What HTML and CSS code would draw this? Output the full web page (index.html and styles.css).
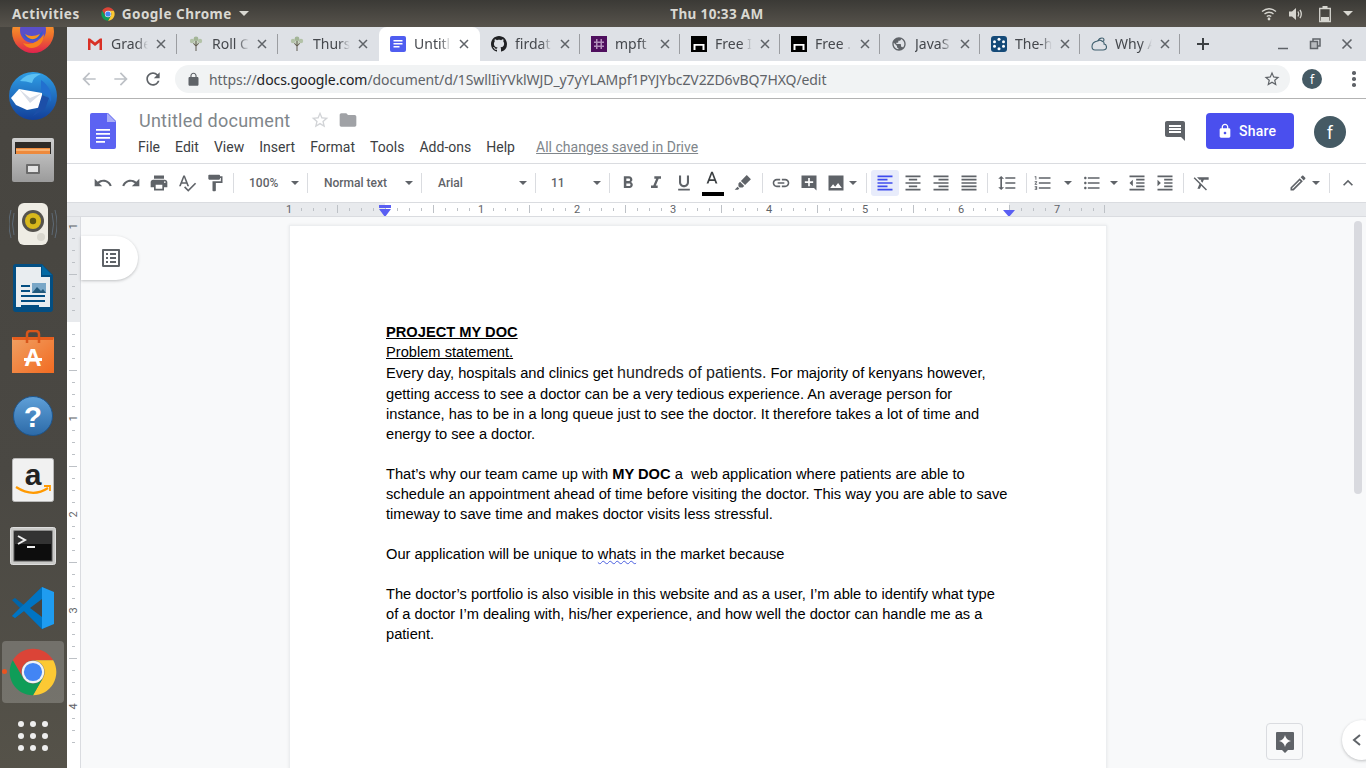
FILE: index.html
```html
<!DOCTYPE html>
<html lang="en">
<head>
<meta charset="utf-8">
<title>Untitled document - Google Docs</title>
<link rel="stylesheet" href="styles.css">
</head>
<body>
<svg class="defs" width="0" height="0" aria-hidden="true">
  <symbol id="chrome" viewBox="0 0 48 48">
    <path fill="#db4437" d="M6.68 14A20 20 0 0 1 41.32 14H24A10 10 0 0 0 15.34 29Z"/>
    <path fill="#fcc934" d="M41.32 14A20 20 0 0 1 24 44L32.66 29A10 10 0 0 0 24 14Z"/>
    <path fill="#0f9d58" d="M24 44A20 20 0 0 1 6.68 14L15.34 29A10 10 0 0 0 32.66 29Z"/>
    <circle cx="24" cy="24" r="9.6" fill="#f1f3f4"/>
    <circle cx="24" cy="24" r="7.8" fill="#4285f4"/>
  </symbol>
  <symbol id="tree" viewBox="0 0 16 16">
    <circle cx="4" cy="5" r="2.2" fill="#b3c2a8"/><circle cx="12" cy="5" r="2.2" fill="#b3c2a8"/>
    <circle cx="8" cy="3" r="2.4" fill="#a3b597"/><circle cx="8" cy="7" r="2.2" fill="#c3cfba"/>
    <path fill="#5f5a4e" d="M7.5 9V5h1v4l2-2 .6.6L8.5 10.3V15h-1v-4.7L5 7.6l.6-.6z"/>
  </symbol>
  <symbol id="arch" viewBox="0 0 16 16">
    <path fill="#000" d="M0 0h16v16H0z"/><path fill="#fff" d="M2.500 14V8h11v6h-2V9.800H4.500V14z"/>
  </symbol>
  <symbol id="close" viewBox="0 0 10 10">
    <path d="M1 1l8 8M9 1L1 9" stroke="#5f6368" stroke-width="1.500" fill="none"/>
  </symbol>
</svg>

<header class="topbar">
  <span class="top-left">
    <span class="top-label">Activities</span>
    <span class="app-menu">
      <svg class="app-logo" width="16" height="16"><use href="#chrome"/></svg>
      <span class="top-label">Google Chrome</span>
      <span class="top-caret"></span>
    </span>
  </span>
  <span class="top-label clock">Thu 10:33 AM</span>
  <span class="top-status">
    <svg width="16" height="16" viewBox="0 0 16 16" fill="none" stroke="#d6d5cf" stroke-width="1.400"><path d="M1 5.500q7-5.500 14 0M3.500 8q4.500-3.500 9 0M5.800 10.500q2.200-1.700 4.400 0"/><circle cx="8" cy="13" r="1.400" fill="#d6d5cf" stroke="none"/></svg>
    <svg class="vol" width="16" height="16" viewBox="0 0 16 16" fill="none" stroke="#d6d5cf" stroke-width="1.300"><path fill="#d6d5cf" stroke="none" d="M1 5.500h3L8 2v12L4 10.500H1z"/><path d="M10 5.500q1.500 2.500 0 5M12 3.800q2.600 4.200 0 8.400"/></svg>
    <svg width="14" height="18" viewBox="0 0 14 18" fill="none" stroke="#d6d5cf" stroke-width="1.300"><path d="M1.700 3.500h10.600v13H1.700z"/><path fill="#d6d5cf" stroke="none" d="M4.500 1h5v2h-5zM3 12h8v4H3z"/></svg>
    <span class="top-caret status-caret"></span>
  </span>
</header>

<div class="desktop">
  <nav class="dock">
    <div class="dock-inner">
      <div class="dock-item"><svg width="44" height="44" viewBox="0 0 44 44"><defs><linearGradient id="ff" x1="0" y1="0" x2="0" y2="1"><stop offset="0" stop-color="#ffc02e"/><stop offset=".6" stop-color="#f0702b"/><stop offset="1" stop-color="#e0224e"/></linearGradient></defs><circle cx="22" cy="22" r="21" fill="url(#ff)"/><circle cx="22" cy="20" r="13" fill="#5a4fc8"/><path fill="#2b5fce" d="M12 24q10 8 20-3-2 9-11 9-6 0-9-6z"/><path fill="#f7921f" d="M14 24q6 4 15 0-3 6-9 5-4-1-6-5z"/><path fill="#f7821f" d="M12 33q12 4 21-9-1 13-12 14-6 0-9-5z"/></svg></div>
      <div class="dock-item"><svg width="48" height="48" viewBox="0 0 48 48"><defs><linearGradient id="tb" x1="0" y1="0" x2="0" y2="1"><stop offset="0" stop-color="#2f9fe6"/><stop offset="1" stop-color="#123f9a"/></linearGradient></defs><circle cx="24" cy="24" r="24" fill="url(#tb)"/><path fill="#5dc1f3" d="M11 9Q18 0 32 2q-8 3-9 9-6-2-12-2z"/><path fill="#2270cf" d="M32 8q12 8 10 22-3-8-10-10z"/><path fill="#fff" d="M2 26l8-9 23 4v14L18 38 7 33z"/><path fill="#d8dde6" d="M10 17l11 9 12-5-12 10z"/><path fill="#1c4fa8" d="M33 23l7 3-4 11-12 7 5-8z"/></svg></div>
      <div class="dock-item"><svg width="42" height="44" viewBox="0 0 42 44"><defs><linearGradient id="fc" x1="0" y1="0" x2="0" y2="1"><stop offset="0" stop-color="#cfcfcf"/><stop offset="1" stop-color="#9b9b9b"/></linearGradient></defs><rect width="42" height="44" rx="2" fill="url(#fc)"/><rect x="3" y="4" width="36" height="12" fill="#2d2a27"/><rect x="4" y="10" width="34" height="6" fill="#ee8a3c"/><path stroke="#ffd9a8" d="M4 12h34"/><rect x="14" y="26" width="14" height="10" rx="1" fill="#6b6b6b"/><rect x="16" y="28" width="10" height="6" fill="#e4e4e4"/></svg></div>
      <div class="dock-item"><svg width="48" height="44" viewBox="0 0 48 44"><g fill="none" stroke="#6f87a0" stroke-opacity=".55"><path d="M2 8q-4 14 0 28M5 11q-3 11 0 22M46 8q4 14 0 28M43 11q3 11 0 22"/></g><rect x="9" y="1" width="30" height="42" rx="6" fill="#eeece4"/><circle cx="24" cy="19" r="11" fill="#55534e"/><circle cx="24" cy="19" r="8" fill="#d8b81c"/><circle cx="24" cy="19" r="3.200" fill="#5a5213"/><circle cx="32" cy="35" r="4" fill="#d9d7ce"/></svg></div>
      <div class="dock-item"><svg width="40" height="48" viewBox="0 0 40 48"><path fill="#034e82" d="M0 3q0-3 3-3h26l11 11v34q0 3-3 3H3q-3 0-3-3z"/><path fill="#e9edf0" d="M3 3h25v10h9v30H3z"/><path fill="#0369a3" d="M29 1l10 10H29z"/><path fill="#034e82" d="M8 21h9v2H8zM8 26h9v2H8zM8 31h24v2H8zM8 36h24v2H8zM8 41h18v2H8z"/><rect x="19" y="19" width="14" height="10" fill="#7aa7c7"/><path fill="#235a7c" d="M19 29l5-6 4 4 2-2 3 4z"/></svg></div>
      <div class="dock-item"><svg width="42" height="44" viewBox="0 0 42 44"><defs><linearGradient id="st" x1="0" y1="0" x2="1" y2="1"><stop offset="0" stop-color="#f0a063"/><stop offset="1" stop-color="#f26b21"/></linearGradient></defs><path fill="url(#st)" d="M0 7h42v36H0z"/><path fill="#e55d1d" d="M0 7h42l-1 3H1z"/><path d="M15 13V4q0-3 3-3h6q3 0 3 3v9" fill="none" stroke="#d9561b" stroke-width="2.500"/><text class="store-a" x="21" y="36" text-anchor="middle">A</text><path fill="#fff" d="M12 28h18v3H12z"/></svg></div>
      <div class="dock-item"><svg width="40" height="40" viewBox="0 0 40 40"><defs><linearGradient id="hp" x1="0" y1="0" x2="0" y2="1"><stop offset="0" stop-color="#5fa0d8"/><stop offset="1" stop-color="#2c6aa8"/></linearGradient></defs><circle cx="20" cy="20" r="19.500" fill="url(#hp)" stroke="#1e558c"/><text class="help-q" x="20" y="31" text-anchor="middle">?</text></svg></div>
      <div class="dock-item"><svg width="42" height="44" viewBox="0 0 42 44"><rect x=".5" y=".5" width="41" height="43" rx="2" fill="#f1f1f1" stroke="#b9b9b9"/><text class="amz-a" x="21" y="27" text-anchor="middle">a</text><path d="M4 29q17 11 32 1" fill="none" stroke="#f90" stroke-width="2.200"/><path d="M32 28h6v5" fill="none" stroke="#f90" stroke-width="1.800"/></svg></div>
      <div class="dock-item dock-term"><svg width="46" height="38" viewBox="0 0 46 38"><rect x=".5" y=".5" width="45" height="37" rx="2" fill="#c9c9c7" stroke="#dedede"/><rect x="4" y="4" width="38" height="30" fill="#0d0d0d" stroke="#555"/><rect x="5" y="5" width="36" height="12" fill="#333"/><path d="M8 9l7 4-7 4" fill="none" stroke="#efefef" stroke-width="2"/><path stroke="#efefef" stroke-width="2" d="M17 20h8"/></svg></div>
      <div class="dock-item"><svg width="44" height="44" viewBox="0 0 44 44"><path fill="#0065a9" d="M31 1L13 19 4 12l-3 2 8 8-8 8 3 2 9-7 18 18 4-2V3z"/><path fill="#007acc" d="M31 43L13 25l-9 7-3-2 8-8 22-21z" opacity=".75"/><path fill="#1f9cf0" d="M31 1l12 5v32l-12 5z"/><path fill="#464440" d="M31 13v18L19 22z"/></svg></div>
      <div class="dock-item dock-active"><span class="run-dot"></span><svg width="56" height="56"><use href="#chrome"/></svg></div>
      <div class="dock-item"><div class="apps"><i></i><i></i><i></i><i></i><i></i><i></i><i></i><i></i><i></i></div></div>
    </div>
  </nav>

  <main class="window">
    <div class="tabstrip">
      <div class="tabs">
        <div class="tab"><svg class="favicon" viewBox="0 0 16 16"><path fill="#d93025" d="M1 2.500h2l5 4 5-4h2v11.500h-2.500V6.500L8 10 3.500 6.500V14H1z"/></svg><span class="tab-label">Grade</span><svg class="tab-x"><use href="#close"/></svg></div>
        <div class="tab"><svg class="favicon"><use href="#tree"/></svg><span class="tab-label">Roll C</span><svg class="tab-x"><use href="#close"/></svg></div>
        <div class="tab"><svg class="favicon"><use href="#tree"/></svg><span class="tab-label">Thurs</span><svg class="tab-x"><use href="#close"/></svg></div>
        <div class="tab tab-active"><svg class="favicon" viewBox="0 0 16 16"><rect width="16" height="16" rx="2" fill="#4f5df0"/><path fill="#fff" d="M3.500 4h9v1.500h-9zM3.500 7h9v1.500h-9zM3.500 10h6v1.500h-6z"/></svg><span class="tab-label">Untitl</span><svg class="tab-x"><use href="#close"/></svg></div>
        <div class="tab"><svg class="favicon" viewBox="0 0 16 16"><path fill="#202124" d="M8 0C3.580 0 0 3.580 0 8c0 3.540 2.290 6.530 5.470 7.590.4.070.55-.17.55-.38 0-.19-.01-.82-.01-1.490-2.010.37-2.530-.49-2.690-.94-.09-.23-.48-.94-.82-1.130-.28-.15-.68-.52-.01-.53.63-.01 1.080.58 1.230.82.72 1.210 1.870.87 2.330.66.070-.52.28-.87.51-1.070-1.780-.2-3.640-.89-3.640-3.950 0-.87.31-1.590.82-2.150-.08-.2-.36-1.020.08-2.120 0 0 .67-.21 2.200.82.64-.18 1.320-.27 2-.27s1.360.09 2 .27c1.530-1.040 2.200-.82 2.200-.82.44 1.100.16 1.920.08 2.120.51.56.82 1.270.82 2.150 0 3.070-1.870 3.750-3.650 3.950.29.25.54.73.54 1.480 0 1.070-.01 1.930-.01 2.200 0 .21.15.46.55.38A8.010 8.010 0 0 0 16 8c0-4.420-3.580-8-8-8z"/></svg><span class="tab-label">firdat</span><svg class="tab-x"><use href="#close"/></svg></div>
        <div class="tab"><svg class="favicon" viewBox="0 0 16 16"><rect width="16" height="16" fill="#4f0f5e"/><path fill="#b28fbb" d="M5 3h1.500v10H5zM9.500 3H11v10H9.500zM3 5.500h10V7H3zM3 9.500h10V11H3z"/></svg><span class="tab-label">mpft</span><svg class="tab-x"><use href="#close"/></svg></div>
        <div class="tab"><svg class="favicon"><use href="#arch"/></svg><span class="tab-label">Free I</span><svg class="tab-x"><use href="#close"/></svg></div>
        <div class="tab"><svg class="favicon"><use href="#arch"/></svg><span class="tab-label">Free .</span><svg class="tab-x"><use href="#close"/></svg></div>
        <div class="tab"><svg class="favicon" viewBox="0 0 24 24"><path fill="#5f6368" d="M12 2C6.480 2 2 6.480 2 12s4.480 10 10 10 10-4.480 10-10S17.520 2 12 2zm-1 17.930c-3.950-.49-7-3.850-7-7.930 0-.62.080-1.210.21-1.790L9 15v1c0 1.100.9 2 2 2v1.930zm6.900-2.540c-.26-.81-1-1.390-1.900-1.390h-1v-3c0-.55-.45-1-1-1H8v-2h2c.55 0 1-.45 1-1V7h2c1.100 0 2-.9 2-2v-.41c2.930 1.190 5 4.060 5 7.410 0 2.080-.8 3.970-2.100 5.390z"/></svg><span class="tab-label">JavaS</span><svg class="tab-x"><use href="#close"/></svg></div>
        <div class="tab"><svg class="favicon" viewBox="0 0 16 16"><rect width="16" height="16" rx="3" fill="#154a78"/><g fill="#fff"><circle cx="8" cy="3.200" r="1.500"/><circle cx="8" cy="12.800" r="1.500"/><circle cx="3.500" cy="5.800" r="1.500"/><circle cx="12.500" cy="5.800" r="1.500"/><circle cx="3.500" cy="10.200" r="1.500"/><circle cx="12.500" cy="10.200" r="1.500"/></g></svg><span class="tab-label">The-h</span><svg class="tab-x"><use href="#close"/></svg></div>
        <div class="tab"><svg class="favicon" viewBox="0 0 16 16" fill="none" stroke="#40606f" stroke-width="1.100"><path d="M4 14h8q3.500-.2 3.500-3T13 8q.5-2-1.500-2.500Q9 3 6.500 5 1 6 1 10.500 1 14 4 14z"/><path d="M7 5q1-3 4-3 2 0 2 2 0 1-1.500 1.500"/></svg><span class="tab-label">Why A</span><svg class="tab-x"><use href="#close"/></svg></div>
      </div>
      <svg class="new-tab" width="14" height="14" viewBox="0 0 14 14"><path d="M7 1v12M1 7h12" stroke="#3c4043" stroke-width="2"/></svg>
      <div class="win-ctrls">
        <svg width="12" height="12" viewBox="0 0 12 12"><path d="M1 10.500h10" stroke="#5f6368" stroke-width="1.500"/></svg>
        <svg width="12" height="12" viewBox="0 0 12 12" fill="none" stroke="#5f6368" stroke-width="1.500"><path d="M4 3V1h7v7H9"/><path d="M1.500 3.500h7v7h-7z" fill="#5f6368" fill-opacity=".3"/></svg>
        <svg width="12" height="12" viewBox="0 0 12 12"><path d="M1.500 1.500l9 9M10.500 1.500l-9 9" stroke="#5f6368" stroke-width="1.600"/></svg>
      </div>
    </div>

    <div class="navbar">
      <svg class="nav-ico" viewBox="0 0 24 24"><path fill="#bdc1c6" d="M20 11H7.830l5.590-5.590L12 4l-8 8 8 8 1.410-1.410L7.830 13H20v-2z"/></svg>
      <svg class="nav-ico" viewBox="0 0 24 24"><path fill="#bdc1c6" d="M12 4l-1.410 1.410L16.170 11H4v2h12.170l-5.580 5.590L12 20l8-8z"/></svg>
      <svg class="nav-ico" viewBox="0 0 24 24"><path fill="#5f6368" d="M17.650 6.350C16.200 4.900 14.210 4 12 4c-4.420 0-7.990 3.580-7.990 8s3.570 8 7.990 8c3.730 0 6.840-2.550 7.730-6h-2.080c-.82 2.330-3.040 4-5.650 4-3.310 0-6-2.690-6-6s2.690-6 6-6c1.660 0 3.140.69 4.220 1.780L13 11h7V4l-2.350 2.350z"/></svg>
      <div class="omnibox">
        <svg class="omni-lock" viewBox="0 0 24 24"><path fill="#5f6368" d="M18 8h-1V6c0-2.760-2.240-5-5-5S7 3.240 7 6v2H6c-1.100 0-2 .9-2 2v10c0 1.100.9 2 2 2h12c1.100 0 2-.9 2-2V10c0-1.100-.9-2-2-2zm-2.900 0H8.900V6c0-1.710 1.390-3.100 3.100-3.100 1.710 0 3.100 1.390 3.100 3.100v2z"/></svg>
        <span class="url"><span class="url-dim">https://</span><span class="url-host">docs.google.com</span><span class="url-dim">/document/d/1SwllIiYVklWJD_y7yYLAMpf1PYJYbcZV2ZD6vBQ7HXQ/edit</span></span>
        <svg class="omni-star" viewBox="0 0 24 24"><path fill="#5f6368" d="M22 9.240l-7.190-.62L12 2 9.190 8.630 2 9.240l5.460 4.730L5.820 21 12 17.270 18.180 21l-1.630-7.030L22 9.240zM12 15.400l-3.760 2.270 1-4.280-3.320-2.880 4.380-.38L12 6.100l1.710 4.040 4.380.38-3.320 2.880 1 4.280L12 15.400z"/></svg>
      </div>
      <span class="profile">f</span>
      <span class="kebab"><i></i><i></i><i></i></span>
    </div>

    <div class="docs-head">
      <svg class="docs-logo" width="26" height="36" viewBox="0 0 26 36"><path fill="#5c63f2" d="M2 0h16l8 8v26q0 2-2 2H2q-2 0-2-2V2q0-2 2-2z"/><path fill="#a9adf7" d="M17 0l9 9h-9z"/><path fill="#fff" d="M6 16h14v1.800H6zM6 20h14v1.800H6zM6 24h14v1.800H6zM6 28h9v1.800H6z"/></svg>
      <div class="docs-titles">
        <div class="title-row">
          <span class="doc-title">Untitled document</span>
          <svg class="title-star" viewBox="0 0 24 24"><path fill="#d2d4d7" d="M22 9.240l-7.190-.62L12 2 9.190 8.630 2 9.240l5.460 4.730L5.820 21 12 17.270 18.180 21l-1.630-7.030L22 9.240zM12 15.400l-3.760 2.270 1-4.280-3.320-2.880 4.380-.38L12 6.100l1.710 4.040 4.380.38-3.320 2.880 1 4.280L12 15.400z"/></svg>
          <svg class="title-folder" viewBox="0 0 24 24"><path fill="#a0a2a6" d="M10 4H4c-1.100 0-2 .9-2 2v12c0 1.100.9 2 2 2h16c1.100 0 2-.9 2-2V8c0-1.100-.9-2-2-2h-8l-2-2z"/></svg>
        </div>
        <div class="menu-row">
          <span>File</span><span>Edit</span><span>View</span><span>Insert</span><span>Format</span><span>Tools</span><span>Add-ons</span><span>Help</span>
          <span class="saved">All changes saved in Drive</span>
        </div>
      </div>
      <svg class="head-comment" viewBox="0 0 24 24"><path fill="#5f6368" d="M21.990 4c0-1.100-.89-2-1.990-2H4c-1.100 0-2 .9-2 2v12c0 1.100.9 2 2 2h14l4 4-.01-18zM18 14H6v-2h12v2zm0-3H6V9h12v2zm0-3H6V6h12v2z"/></svg>
      <button class="share"><svg width="16" height="16" viewBox="0 0 24 24"><path fill="#fff" d="M18 8h-1V6c0-2.760-2.240-5-5-5S7 3.240 7 6v2H6c-1.100 0-2 .9-2 2v10c0 1.100.9 2 2 2h12c1.100 0 2-.9 2-2V10c0-1.100-.9-2-2-2zm-6 9c-1.100 0-2-.9-2-2s.9-2 2-2 2 .9 2 2-.9 2-2 2zm3.100-9H8.900V6c0-1.710 1.390-3.100 3.100-3.100 1.710 0 3.100 1.390 3.100 3.100v2z"/></svg>Share</button>
      <span class="account">f</span>
    </div>

    <div class="toolbar">
      <span class="tool"><svg viewBox="0 0 24 24"><path d="M12.500 8c-2.650 0-5.050.99-6.900 2.600L2 7v9h9l-3.620-3.620c1.390-1.160 3.160-1.880 5.120-1.880 3.540 0 6.550 2.310 7.600 5.500l2.370-.78C21.080 11.030 17.150 8 12.500 8z"/></svg></span>
      <span class="tool"><svg viewBox="0 0 24 24"><path d="M18.400 10.600C16.550 8.990 14.150 8 11.500 8c-4.650 0-8.580 3.030-9.960 7.220L3.900 16c1.050-3.190 4.050-5.500 7.600-5.500 1.950 0 3.730.72 5.120 1.880L13 16h9V7l-3.600 3.600z"/></svg></span>
      <span class="tool"><svg viewBox="0 0 24 24"><path d="M19 8H5c-1.660 0-3 1.340-3 3v6h4v4h12v-4h4v-6c0-1.660-1.340-3-3-3zm-3 11H8v-5h8v5zm3-7c-.55 0-1-.45-1-1s.45-1 1-1 1 .45 1 1-.45 1-1 1zm-1-9H6v4h12V3z"/></svg></span>
      <span class="tool"><svg viewBox="0 0 24 24"><path d="M12.450 16h2.090L9.430 3H7.570L2.460 16h2.090l1.120-3h5.640l1.140 3zm-6.020-5L8.500 5.480 10.570 11H6.430zm15.160.59l-8.090 8.090L9.830 16l-1.410 1.410 5.090 5.090L23 13l-1.410-1.410z"/></svg></span>
      <span class="tool"><svg viewBox="0 0 24 24"><path d="M18 4V3c0-.55-.45-1-1-1H5c-.55 0-1 .45-1 1v4c0 .55.45 1 1 1h12c.55 0 1-.45 1-1V6h1v4H9v11c0 .55.45 1 1 1h2c.55 0 1-.45 1-1v-9h8V4h-3z"/></svg></span>
      <i class="sep"></i>
      <span class="drop drop-zoom"><span>100%</span><b class="caret"></b></span>
      <i class="sep"></i>
      <span class="drop drop-style"><span>Normal text</span><b class="caret"></b></span>
      <i class="sep"></i>
      <span class="drop drop-font"><span>Arial</span><b class="caret"></b></span>
      <i class="sep"></i>
      <span class="drop drop-zoom"><span>11</span><b class="caret"></b></span>
      <i class="sep"></i>
      <span class="tool"><svg viewBox="0 0 24 24"><path d="M15.600 10.790c.97-.67 1.650-1.770 1.650-2.790 0-2.260-1.750-4-4-4H7v14h7.040c2.090 0 3.710-1.700 3.710-3.790 0-1.520-.86-2.820-2.150-3.420zM10 6.500h3c.83 0 1.500.67 1.500 1.500s-.67 1.500-1.500 1.500h-3v-3zm3.500 9H10v-3h3.500c.83 0 1.500.67 1.500 1.500s-.67 1.500-1.500 1.500z"/></svg></span>
      <span class="tool"><svg viewBox="0 0 24 24"><path d="M10 4v3h2.210l-3.420 8H6v3h8v-3h-2.210l3.420-8H18V4z"/></svg></span>
      <span class="tool"><svg viewBox="0 0 24 24"><path d="M12 17c3.310 0 6-2.690 6-6V3h-2.500v8c0 1.930-1.570 3.500-3.500 3.500S8.500 12.930 8.500 11V3H6v8c0 3.310 2.690 6 6 6zm-7 2v2h14v-2H5z"/></svg></span>
      <span class="tool tool-color"><svg viewBox="0 0 24 24"><path d="M11 1L5.500 15h2.250l1.120-3h6.250l1.120 3h2.250L13 1h-2zm-1.380 9L12 3.670 14.380 10H9.620z"/></svg><b class="colorbar"></b></span>
      <span class="tool tool-wide"><svg viewBox="0 0 24 24"><path d="M16.500 2.500l5 5-7 7-5-5zM8.500 10.500l5 5-2 2h-3.500l-1.500-1.500V12.500zM5.500 16.500l2 2-1.500 1.500H2z"/></svg></span>
      <i class="sep"></i>
      <span class="tool"><svg viewBox="0 0 24 24"><path d="M3.900 12c0-1.710 1.390-3.100 3.100-3.100h4V7H7c-2.760 0-5 2.240-5 5s2.240 5 5 5h4v-1.900H7c-1.710 0-3.100-1.390-3.100-3.100zM8 13h8v-2H8v2zm9-6h-4v1.900h4c1.710 0 3.100 1.390 3.100 3.100s-1.390 3.100-3.100 3.100h-4V17h4c2.760 0 5-2.240 5-5s-2.240-5-5-5z"/></svg></span>
      <span class="tool"><svg viewBox="0 0 24 24"><path fill-rule="evenodd" d="M3 3h18v18l-3-3H3zM11 6v4H7v2h4v4h2v-4h4v-2h-4V6z"/></svg></span>
      <span class="tool-caret tool-image"><svg viewBox="0 0 24 24"><path fill-rule="evenodd" d="M3 3h18v18H3zM5 18h14l-4.500-6-3.500 4.500-2.500-3z"/></svg><b class="caret"></b></span>
      <i class="sep"></i>
      <span class="tool tool-on"><svg viewBox="0 0 24 24"><path d="M15 15H3v2h12v-2zm0-8H3v2h12V7zM3 13h18v-2H3v2zm0 8h18v-2H3v2zM3 3v2h18V3H3z"/></svg></span>
      <span class="tool"><svg viewBox="0 0 24 24"><path d="M7 15v2h10v-2H7zm-4 6h18v-2H3v2zm0-8h18v-2H3v2zm4-6v2h10V7H7zM3 3v2h18V3H3z"/></svg></span>
      <span class="tool"><svg viewBox="0 0 24 24"><path d="M3 21h18v-2H3v2zm6-4h12v-2H9v2zm-6-4h18v-2H3v2zm6-4h12V7H9v2zM3 3v2h18V3H3z"/></svg></span>
      <span class="tool"><svg viewBox="0 0 24 24"><path d="M3 21h18v-2H3v2zm0-4h18v-2H3v2zm0-4h18v-2H3v2zm0-4h18V7H3v2zm0-6v2h18V3H3z"/></svg></span>
      <i class="sep"></i>
      <span class="tool tool-spacing"><svg viewBox="0 0 24 24"><path d="M6 7h2.500L5 3.500 1.500 7H4v10H1.500L5 20.500 8.500 17H6V7zm4-2v2h12V5H10zm0 14h12v-2H10v2zm0-6h12v-2H10v2z"/></svg></span>
      <i class="sep"></i>
      <span class="tool-caret tool-num"><svg viewBox="0 0 24 24"><path d="M2 17h2v.5H3v1h1v.5H2v1h3v-4H2v1zm1-9h1V4H2v1h1v3zm-1 3h1.800L2 13.100v.9h3v-1H3.200L5 10.900V10H2v1zm5-6v2h14V5H7zm0 14h14v-2H7v2zm0-6h14v-2H7v2z"/></svg><b class="caret"></b></span>
      <span class="tool-caret tool-bul"><svg viewBox="0 0 24 24"><path d="M4 10.500c-.83 0-1.500.67-1.500 1.500s.67 1.500 1.500 1.500 1.500-.67 1.500-1.500-.67-1.500-1.500-1.500zm0-6c-.83 0-1.500.67-1.500 1.500S3.170 7.500 4 7.500 5.500 6.830 5.500 6 4.830 4.500 4 4.500zm0 12c-.83 0-1.500.68-1.500 1.500s.68 1.500 1.500 1.500 1.500-.68 1.500-1.500-.67-1.500-1.500-1.500zM7 19h14v-2H7v2zm0-6h14v-2H7v2zm0-8v2h14V5H7z"/></svg><b class="caret"></b></span>
      <span class="tool"><svg viewBox="0 0 24 24"><path d="M11 17h10v-2H11v2zm-8-5l4 4V8l-4 4zm0 9h18v-2H3v2zM3 3v2h18V3H3zm8 6h10V7H11v2zm0 4h10v-2H11v2z"/></svg></span>
      <span class="tool"><svg viewBox="0 0 24 24"><path d="M3 21h18v-2H3v2zM3 8v8l4-4-4-4zm8 9h10v-2H11v2zM3 3v2h18V3H3zm8 6h10V7H11v2zm0 4h10v-2H11v2z"/></svg></span>
      <i class="sep"></i>
      <span class="tool"><svg viewBox="0 0 24 24"><path d="M3.270 5L2 6.270l6.970 6.970L6.500 19h3l1.570-3.660L16.730 21 18 19.730 3.550 5.270 3.270 5zM6 5v.18L8.820 8h2.400l-.72 1.680 2.100 2.100L14.210 8H20V5H6z"/></svg></span>
      <span class="tool-caret tool-pen"><svg viewBox="0 0 24 24"><path d="M14.060 9.020l.92.92L5.920 19H5v-.92l9.060-9.060M17.660 3c-.25 0-.51.1-.7.29l-1.830 1.830 3.750 3.750 1.830-1.830c.39-.39.39-1.020 0-1.410l-2.340-2.340c-.2-.2-.45-.29-.71-.29zm-3.600 3.190L3 17.250V21h3.750L17.810 9.940l-3.750-3.750z"/></svg><b class="caret"></b></span>
      <i class="sep"></i>
      <span class="tool"><svg viewBox="0 0 24 24"><path d="M7.410 15.410L12 10.830l4.590 4.580L18 14l-6-6-6 6z"/></svg></span>
    </div>

    <div class="hruler">
      <div class="h-track">
        <span class="h-cell h-first"><em class="h-num-off">1</em></span><span class="h-cell"></span><span class="h-cell"><em>1</em></span><span class="h-cell"><em>2</em></span><span class="h-cell"><em>3</em></span><span class="h-cell"><em>4</em></span><span class="h-cell"><em>5</em></span><span class="h-cell"><em>6</em></span><span class="h-cell h-last"><em class="h-num-off">7</em></span>
      </div>
      <svg class="marker marker-left" width="12" height="12" viewBox="0 0 12 12"><path fill="#5a5ff3" d="M0 0h12v3H0zM0 4h12L6 12z"/></svg>
      <svg class="marker marker-right" width="12" height="7" viewBox="0 0 12 7"><path fill="#5a5ff3" d="M0 0h12L6 7z"/></svg>
    </div>

    <div class="docs-body">
      <aside class="vruler">
        <div class="v-off"><span class="v-num">1</span></div>
        <div class="v-half"></div>
        <span class="v-cell"><em>1</em></span><span class="v-cell"><em>2</em></span><span class="v-cell"><em>3</em></span><span class="v-cell"><em>4</em></span>
      </aside>
      <div class="scroller">
        <article class="page">
          <p><strong class="u">PROJECT MY DOC</strong></p>
          <p><span class="u">Problem statement.</span></p>
          <p>Every day, hospitals and clinics get <span class="big">hundreds of patients.</span> For majority of kenyans however, getting access to see a doctor can be a very tedious experience. An average person for instance, has to be in a long queue just to see the doctor. It therefore takes a lot of time and energy to see a doctor.</p>
          <p class="blank">&nbsp;</p>
          <p>That’s why our team came up with <strong>MY DOC</strong> a&nbsp; web application where patients are able to schedule an appointment ahead of time before visiting the doctor. This way you are able to save timeway to save time and makes doctor visits less stressful.</p>
          <p class="blank">&nbsp;</p>
          <p>Our application will be unique to <span class="squiggle">whats</span> in the market because</p>
          <p class="blank">&nbsp;</p>
          <p>The doctor’s portfolio is also visible in this website and as a user, I’m able to identify what type of a doctor I’m dealing with, his/her experience, and how well the doctor can handle me as a patient.</p>
        </article>
      </div>
      <div class="outline-btn"><svg width="24" height="24" viewBox="0 0 24 24"><path fill="#5f6368" d="M19 5v14H5V5h14m1.100-2H3.900c-.5 0-.9.4-.9.9v16.200c0 .4.4.9.9.9h16.200c.4 0 .9-.5.9-.9V3.900c0-.5-.5-.9-.9-.9zM11 7h6v2h-6V7zm0 4h6v2h-6v-2zm0 4h6v2h-6zM7 7h2v2H7zm0 4h2v2H7zm0 4h2v2H7z"/></svg></div>
      <div class="scrollbar"></div>
      <div class="explore"><svg width="20" height="22" viewBox="0 0 20 22"><path fill="#5f6368" d="M2 1h16q1 0 1 1v16q0 1-1 1h-5l-3 3-3-3H2q-1 0-1-1V2q0-1 1-1z"/><path fill="#fff" d="M10 4q1 5 6 6-5 1-6 6-1-5-6-6 5-1 6-6z"/></svg></div>
      <div class="side-toggle"><svg width="10" height="12" viewBox="0 0 10 12"><path d="M8 1L2 6l6 5" fill="none" stroke="#5f6368" stroke-width="2"/></svg></div>
    </div>
  </main>
</div>
</body>
</html>
```

FILE: styles.css
```css
* { box-sizing: border-box; }
html, body { margin: 0; height: 100%; overflow: hidden; }
body { width: 1366px; height: 768px; display: flex; flex-direction: column; font-family: Roboto, "Liberation Sans", sans-serif; background: #464440; }
.defs { position: absolute; }
svg { display: block; flex: none; }

/* GNOME top bar */
.topbar { height: 27px; flex: none; display: grid; grid-template-columns: 1fr auto 1fr; align-items: center; padding: 0 12px; background: linear-gradient(#3b3a36, #57534c); color: #d9d8d2; position: relative; z-index: 2; }
.top-left { display: flex; align-items: center; gap: 20px; }
.app-menu { display: flex; align-items: center; gap: 6px; }
.top-label { font: 700 13.5px "Noto Sans", sans-serif; letter-spacing: .5px; white-space: nowrap; }
.clock { letter-spacing: .35px; transform: translateX(34px); }
.top-caret { width: 0; height: 0; border: 5px solid transparent; border-top: 5px solid #d9d8d2; border-bottom: 0; margin-left: 1px; }
.top-status { display: flex; align-items: center; justify-content: flex-end; gap: 11px; padding-right: 1px; }
.top-status .vol { margin-right: 3px; }
.status-caret { margin-left: 0; }

.desktop { flex: 1; display: flex; min-height: 0; }

/* Dock */
.dock { width: 67px; flex: none; overflow: hidden; background: linear-gradient(#46443f, #4a4843 60%, #555249); }
.dock-inner { margin-top: -27px; }
.dock-item { height: 64px; width: 66px; display: flex; align-items: center; justify-content: center; position: relative; }
.dock-term svg { margin-top: 4px; }
.dock-active { background: rgba(255, 255, 255, .2); width: 62px; height: 62px; margin: 1px 2px; border-radius: 4px; }
.run-dot { position: absolute; left: 0; top: 28px; width: 5px; height: 5px; border-radius: 50%; background: #e95420; }
.apps { display: grid; grid-template-columns: repeat(3, 6px); gap: 6px; }
.apps i { width: 6px; height: 6px; border-radius: 50%; background: #eee; }
.store-a { font: 700 24px "Liberation Sans", sans-serif; fill: #fff; }
.help-q { font: 700 30px "Liberation Sans", sans-serif; fill: #fff; }
.amz-a { font: 700 30px "Liberation Sans", sans-serif; fill: #222; }

/* Chrome window */
.window { flex: 1; min-width: 0; display: flex; flex-direction: column; background: #fff; }
.tabstrip { height: 34px; flex: none; display: flex; align-items: center; padding-left: 9px; background: #dee1e6; }
.tabs { display: grid; grid-template-columns: repeat(4, 101px) repeat(7, 100px); height: 34px; flex: none; }
.tab { display: flex; align-items: center; padding: 0 0 1px 11px; position: relative; height: 34px; }
.tab::after { content: ""; position: absolute; right: 0; top: 7px; width: 1px; height: 20px; background: #9b9da1; }
.tab-active { background: #fff; border-radius: 8px 8px 0 0; }
.tab-active::after, .tab:nth-child(3)::after { display: none; }
.favicon { width: 16px; height: 16px; margin-right: 8px; }
.tab-label { width: 37px; overflow: hidden; white-space: nowrap; font: 14px "Noto Sans", sans-serif; color: #45484d; -webkit-mask-image: linear-gradient(90deg, #000 70%, transparent); mask-image: linear-gradient(90deg, #000 70%, transparent); }
.tab-x { width: 10px; height: 10px; margin-left: 8px; }
.new-tab { margin-left: 16px; }
.win-ctrls { margin-left: auto; display: flex; gap: 20px; padding-right: 13px; }

.navbar { height: 38px; flex: none; display: flex; align-items: center; padding: 0 0 1px 12px; background: #fff; border-bottom: 1px solid #b3b3b3; }
.nav-ico { width: 20px; height: 20px; margin-right: 12px; }
.omnibox { width: 1115px; height: 28px; border-radius: 14px; background: #f1f3f4; display: flex; align-items: center; padding: 0 9px 0 11px; }
.omni-lock { width: 15px; height: 15px; margin-right: 8px; }
.url { font: 14px "Noto Sans", sans-serif; letter-spacing: -.08px; white-space: nowrap; flex: 1; }
.url-dim { color: #5f6368; }
.url-host { color: #202124; }
.omni-star { width: 18px; height: 18px; }
.profile { width: 20px; height: 20px; border-radius: 50%; background: #455a64; color: #fff; font: 12px "Noto Sans", sans-serif; display: flex; align-items: center; justify-content: center; margin-left: 12px; }
.kebab { display: flex; flex-direction: column; gap: 2.5px; margin-left: 30px; }
.kebab i { width: 3.5px; height: 3.5px; border-radius: 50%; background: #5f6368; }

/* Docs header */
.docs-head { height: 65px; flex: none; display: flex; align-items: center; padding: 0 52px 0 23px; background: #fff; border-bottom: 1px solid #dadce0; }
.docs-logo { margin-top: -1px; }
.docs-titles { margin-left: 23px; flex: 1; padding-top: 2px; }
.title-row { display: flex; align-items: center; height: 26px; }
.doc-title { font: 18px Roboto, sans-serif; letter-spacing: .25px; color: #80868b; width: 171px; white-space: nowrap; }
.title-star { width: 20px; height: 20px; margin-right: 8px; }
.title-folder { width: 20px; height: 20px; }
.menu-row { display: flex; font: 14px Roboto, sans-serif; color: #3c4043; gap: 15.1px; margin-top: 4px; height: 20px; align-items: center; margin-left: -1px; }
.saved { color: #80868b; text-decoration: underline; margin-left: 6px; }
.head-comment { width: 24px; height: 24px; margin-right: 19px; }
.share { width: 88px; height: 36px; border: 0; border-radius: 4px; background: #4a4fee; color: #fff; font: 500 14px Roboto, sans-serif; letter-spacing: .25px; display: flex; align-items: center; gap: 6px; padding: 0 0 0 11px; }
.account { width: 32px; height: 32px; border-radius: 50%; background: #455a64; color: #fff; font: 18px Roboto, sans-serif; display: flex; align-items: center; justify-content: center; margin-left: 20px; margin-right: -32px; margin-top: 2px; }

/* Toolbar */
.toolbar { height: 39px; flex: none; display: flex; align-items: center; padding: 0 4px 1px 22px; background: #fff; border-bottom: 1px solid #dadce0; }
.toolbar svg { width: 20px; height: 20px; fill: #5f6368; }
.tool { width: 28px; height: 26px; display: flex; align-items: center; justify-content: center; border-radius: 3px; position: relative; }
.tool-wide { width: 32px; padding-left: 2px; }
.tool-spacing { width: 30px; }
.tool-on { background: #e8ecfb; }
.tool-on svg { fill: #3f4cee; }
.tool-color svg { margin-top: -4px; fill: #3c4043; }
.colorbar { position: absolute; left: 4px; bottom: 0; width: 22px; height: 4px; background: #000; }
.sep { width: 1px; height: 20px; margin: 0 4px; background: #dadce0; flex: none; }
.drop { display: flex; align-items: center; font: 500 12px Roboto, sans-serif; color: #5f6368; padding-left: 11px; height: 26px; flex: none; }
.drop-zoom { width: 65px; }
.drop-style, .drop-font { width: 105px; padding-left: 12px; }
.caret { width: 0; height: 0; border: 4px solid transparent; border-top: 4px solid #5f6368; border-bottom: 0; flex: none; }
.drop .caret { margin-left: auto; margin-right: 4px; }
.tool-caret { display: flex; align-items: center; height: 26px; flex: none; }
.tool-image { width: 39px; padding-left: 3px; }
.tool-image .caret { margin-left: 3px; }
.tool-num { width: 47px; padding-left: 2px; }
.tool-num .caret { margin-left: 11px; }
.tool-bul { width: 45px; padding-left: 4px; }
.tool-bul .caret { margin-left: 8px; }
.tool-pen { margin-left: auto; width: 41px; padding-left: 4px; }
.tool-pen .caret { margin-left: 4px; }

/* Horizontal ruler */
.hruler { height: 14px; flex: none; position: relative; background: #e8eaed; border-bottom: 1px solid #dadce0; padding-left: 174px; overflow: hidden; }
.h-track { display: flex; width: 864px; height: 13px; background: linear-gradient(#fff, #fff) 144px 0 / 624px 100% no-repeat; }
.h-cell { width: 96px; height: 13px; flex: none; display: flex; align-items: center; justify-content: center;
  background-image: linear-gradient(#bdc1c6, #bdc1c6), repeating-linear-gradient(90deg, #bdc1c6 0 1px, transparent 1px 12px);
  background-size: 1px 8px, 96px 3px;
  background-position: 0 2px, 0 5px;
  background-repeat: no-repeat; }
.h-first { background-image: repeating-linear-gradient(90deg, #bdc1c6 0 1px, transparent 1px 12px); background-size: 36px 3px; background-position: 60px 5px; }
.h-last { background-image: linear-gradient(#bdc1c6, #bdc1c6), linear-gradient(#bdc1c6, #bdc1c6), repeating-linear-gradient(90deg, #bdc1c6 0 1px, transparent 1px 12px);
  background-size: 1px 8px, 1px 8px, 96px 3px;
  background-position: 0 2px, right 2px, 0 5px; }
.h-cell em { font: normal 11px Roboto, sans-serif; color: #5f6368; background: #fff; padding: 0 3px; line-height: 13px; }
.h-cell .h-num-off { background: #e8eaed; }
.marker { position: absolute; }
.marker-left { left: 312px; top: 2px; }
.marker-right { left: 936px; top: 7px; }

/* Body */
.docs-body { flex: 1; min-height: 0; display: flex; position: relative; background: #f8f9fa; overflow: hidden; }
.vruler { width: 14px; flex: none; border-right: 1px solid #dadce0; background: #fff; }
.v-off { height: 105px; background-color: #e8eaed; padding-top: 3px;
  background-image: linear-gradient(#bdc1c6, #bdc1c6), repeating-linear-gradient(#bdc1c6 0 1px, transparent 1px 12px);
  background-size: 8px 1px, 3px 84px; background-position: 2px 57px, 5px 21px; background-repeat: no-repeat; }
.v-half { height: 48px; background: repeating-linear-gradient(#bdc1c6 0 1px, transparent 1px 12px) 5px 12px / 3px 36px no-repeat; }
.v-num, .v-cell em { display: block; font: normal 11px Roboto, sans-serif; color: #5f6368; transform: rotate(-90deg); text-align: center; width: 13px; line-height: 13px; }
.v-cell { height: 96px; display: flex; align-items: center;
  background-image: linear-gradient(#bdc1c6, #bdc1c6), repeating-linear-gradient(#bdc1c6 0 1px, transparent 1px 12px);
  background-size: 8px 1px, 3px 96px;
  background-position: 2px 0, 5px 0;
  background-repeat: no-repeat; }
.v-cell em { background: #fff; }
.scroller { flex: 1; padding: 9px 0 0 209px; min-width: 0; }
.page { width: 816px; height: 1056px; background: #fff; padding: 96px 96px 0; box-shadow: 0 0 0 1px #eceef0, 0 0 3px 1px #e4e6e8; font: 14.667px/20.01px "Liberation Sans", Arial, sans-serif; color: #000; }
.page p { margin: 0; }
.u { text-decoration: underline; }
.big { font-size: 16px; line-height: 21.47px; color: #222; }
.squiggle { text-decoration: underline wavy #4a5fe0 1px; }

/* Overlays */
.outline-btn { position: absolute; left: 14px; top: 19px; width: 57px; height: 44px; background: #fff; border-radius: 0 22px 22px 0; box-shadow: 0 1px 3px rgba(60, 64, 67, .3); display: flex; align-items: center; justify-content: center; padding-right: 0; padding-left: 2px; }
.scrollbar { position: absolute; left: 1287px; top: 4px; width: 8px; height: 273px; border-radius: 4px; background: #d9dadf; }
.explore { position: absolute; left: 1199px; top: 506px; width: 37px; height: 37px; background: #f8f9fa; border: 1px solid #dadce0; border-radius: 4px; display: flex; align-items: center; justify-content: center; }
.side-toggle { position: absolute; left: 1275px; top: 503px; width: 40px; height: 40px; border-radius: 50%; background: #fff; box-shadow: 0 1px 3px rgba(60, 64, 67, .3); display: flex; align-items: center; padding-left: 10px; }
```
